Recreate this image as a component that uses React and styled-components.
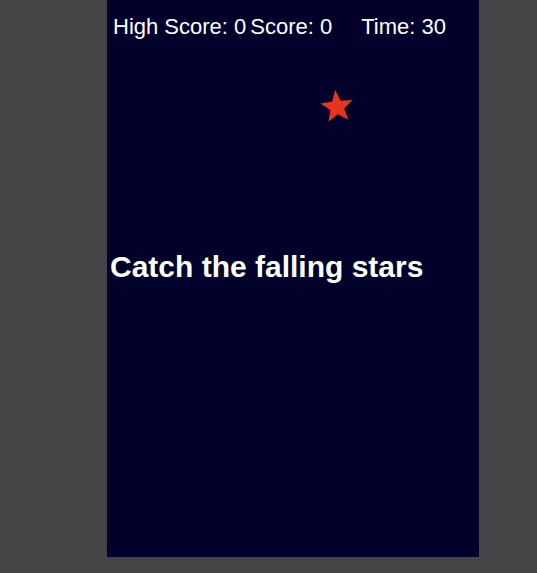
import React from "react";
import styled, { createGlobalStyle } from "styled-components";

const GlobalStyle = createGlobalStyle`
  html, body {
    margin: 0;
    padding: 0;
    background-color: #444446;
    font-family: "Liberation Sans", Arial, sans-serif;
  }
`;

const Page = styled.div`
  display: flex;
  height: 573px;
  padding-left: 107px;
  box-sizing: border-box;
`;

const GameBoard = styled.div`
  position: relative;
  width: 372px;
  height: 557px;
  background-color: #00002b;
  display: flex;
  flex-direction: column;
  overflow: hidden;
`;

const ScoreBar = styled.div`
  display: flex;
  align-items: center;
  padding: 14px 0 0 6px;
  color: #fff;
  font-size: 22px;
  line-height: 25px;
  white-space: nowrap;
`;

const ScoreItem = styled.span`
  margin-right: ${(p) => p.gap || 0}px;
`;

const Message = styled.h1`
  margin: 211px 0 0 3px;
  color: #fff;
  font-size: 30px;
  font-weight: 700;
  line-height: 34px;
  white-space: nowrap;
`;

const Star = styled.svg`
  position: absolute;
  width: 36px;
  height: 36px;
`;

const starPoints = () => {
  const pts = [];
  for (let i = 0; i < 10; i++) {
    const r = i % 2 === 0 ? 17 : 7.3;
    const a = (Math.PI / 5) * i - Math.PI / 2;
    pts.push(`${18 + r * Math.cos(a)},${18 + r * Math.sin(a)}`);
  }
  return pts.join(" ");
};

const FallingStar = ({ x, y }) => (
  <Star viewBox="0 0 36 36" style={{ left: x, top: y }}>
    <polygon points={starPoints()} fill="#e8331f" transform="rotate(-6 18 18)" />
  </Star>
);

export default function App() {
  return (
    <>
      <GlobalStyle />
      <Page>
        <GameBoard>
          <ScoreBar>
            <ScoreItem gap={4}>High Score: 0</ScoreItem>
            <ScoreItem gap={29}>Score: 0</ScoreItem>
            <ScoreItem>Time: 30</ScoreItem>
          </ScoreBar>
          <FallingStar x={212} y={89} />
          <Message>Catch the falling stars</Message>
        </GameBoard>
      </Page>
    </>
  );
}
